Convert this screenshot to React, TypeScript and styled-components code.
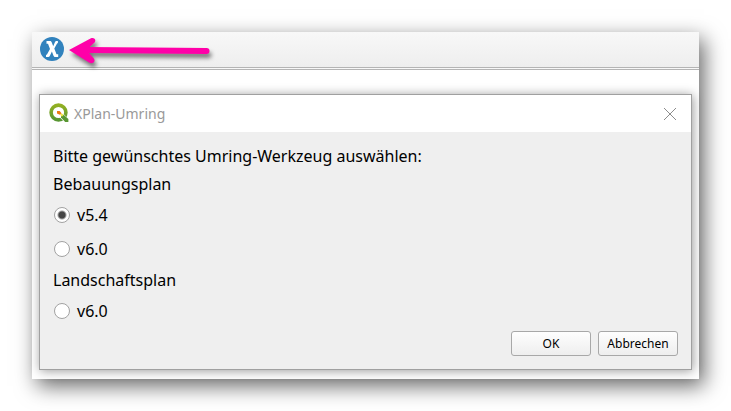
import React, { useState } from "react";
import styled, { createGlobalStyle } from "styled-components";

const GlobalStyle = createGlobalStyle`
  * { box-sizing: border-box; }
  body {
    margin: 0;
    background: #fff;
    color: #000;
    font-family: "Noto Sans", "Open Sans", sans-serif;
  }
`;

const Page = styled.main`
  padding: 32px;
`;

const AppWindow = styled.div`
  background: #fff;
  box-shadow: 5px 7px 20px rgba(0, 0, 0, 0.6);
`;

const Toolbar = styled.header`
  display: flex;
  align-items: center;
  height: 38px;
  padding: 0 7px 1px;
  background: linear-gradient(#f8f8f8, #eeeeee);
  border-bottom: 3px double #b4b4b4;
`;

const ToolButton = styled.button`
  display: flex;
  padding: 0;
  border: 0;
  background: none;
`;

const Arrow = styled.svg`
  margin: 2px 0 0 3px;
  overflow: visible;
  filter: drop-shadow(2px 4px 2px rgba(0, 0, 0, 0.5));
`;

const Workspace = styled.div`
  padding: 24px 7px 9px;
`;

const Dialog = styled.section`
  border: 1px solid #a0a0a0;
  background: #efefef;
  box-shadow: 1px 1px 10px rgba(0, 0, 0, 0.4);
`;

const TitleBar = styled.div`
  display: flex;
  align-items: center;
  height: 37px;
  padding: 0 14px 0 9px;
  background: #fff;
`;

const Title = styled.h1`
  flex: 1;
  margin: 0 0 0 4px;
  font-size: 14px;
  line-height: 24px;
  font-weight: 400;
  color: #999;
`;

const CloseButton = styled.button`
  display: flex;
  padding: 0;
  border: 0;
  background: none;
`;

const Form = styled.form`
  display: flex;
  flex-direction: column;
  gap: 4px;
  padding: 12px 13px 13px;
  font-size: 16px;
  line-height: 24px;
`;

const Text = styled.p`
  margin: 0;
`;

const Option = styled.label`
  display: flex;
  align-items: center;
  gap: 7px;
  height: 30px;
  padding-left: 1px;
`;

const Radio = styled.input`
  appearance: none;
  width: 16px;
  height: 16px;
  margin: 0;
  border: 1px solid #a2a2a2;
  border-radius: 50%;
  background: #fff;

  &:checked {
    background: radial-gradient(circle, #454545 0 3px, #fff 5px);
  }
`;

const Actions = styled.div`
  display: flex;
  justify-content: flex-end;
  gap: 7px;
  padding-top: 1px;
`;

const PushButton = styled.button`
  width: 80px;
  height: 25px;
  padding: 0;
  border: 1px solid #a8a8a8;
  border-radius: 3px;
  background: linear-gradient(#fefefe, #eeeeee);
  color: #000;
  font-family: inherit;
  font-size: 12px;
  line-height: 16px;
`;

function ToolIcon() {
  return (
    <svg width="26" height="26" viewBox="0 0 26 26" aria-hidden="true">
      <circle cx="13" cy="13" r="12" fill="#3182bd" />
      <path
        d="M7.500 5h3.500c1 0 1.500.6 1.800 1.500l1.400 3.800 1.700-4C16.300 5.400 16.800 5 17.600 5h1.300v2.300h-.7l-2.900 5.300 2.200 5.600h1.700V21h-3c-1 0-1.500-.6-1.800-1.500l-1.500-4-2 4.300c-.4.800-.9 1.200-1.700 1.200H7v-2.300h.8l3.200-5.800-2-5.100H7.500z"
        fill="#fff"
      />
    </svg>
  );
}

function QgisIcon() {
  return (
    <svg width="21" height="21" viewBox="0 0 21 21" aria-hidden="true">
      <defs>
        <linearGradient id="ring" x1="0" y1="0" x2="0" y2="1">
          <stop offset="0" stopColor="#93b023" />
          <stop offset="1" stopColor="#589632" />
        </linearGradient>
      </defs>
      <circle cx="9.500" cy="9.500" r="7.400" fill="none" stroke="url(#ring)" strokeWidth="3.600" />
      <path d="m11 11 8.500 8.500" stroke="#fff" strokeWidth="5" />
      <path d="M12 11.700h2.600l4.800 4.300v3h-3.200L12 14.500z" fill="#589632" />
      <path d="m11 11.700 1.700-1.500 1.900 1.900-1.700 1.700z" fill="#f0e64a" />
      <path d="M8 8h2.700l1.800 2.200-1.700 1.600L8 10.500z" fill="#ee7913" />
    </svg>
  );
}

export default function App() {
  const [choice, setChoice] = useState("b54");
  const option = (id: string, label: string) => (
    <Option>
      <Radio
        type="radio"
        name="tool"
        value={id}
        checked={choice === id}
        onChange={() => setChoice(id)}
      />
      {label}
    </Option>
  );

  return (
    <Page>
      <GlobalStyle />
      <AppWindow>
        <Toolbar>
          <ToolButton type="button" aria-label="XPlan-Umring">
            <ToolIcon />
          </ToolButton>
          <Arrow width="142" height="26" viewBox="0 0 142 26" aria-hidden="true">
            <path d="M18 13 138.500 14" stroke="#ff00a8" strokeWidth="6" strokeLinecap="round" />
            <path
              d="M1 13 22.500 1.500c4-1.800 6.500 2 3.500 4.500L18.500 13l7 8c3 3.500-1 6.500-4.500 4.500z"
              fill="#ff00a8"
            />
          </Arrow>
        </Toolbar>
        <Workspace>
          <Dialog role="dialog" aria-labelledby="dialog-title">
            <TitleBar>
              <QgisIcon />
              <Title id="dialog-title">XPlan-Umring</Title>
              <CloseButton type="button" aria-label="Schließen">
                <svg width="14" height="14" viewBox="0 0 14 14" aria-hidden="true">
                  <path d="M1 1 13 13M13 1 1 13" stroke="#8c8c8c" strokeWidth="1" />
                </svg>
              </CloseButton>
            </TitleBar>
            <Form onSubmit={(event) => event.preventDefault()}>
              <Text>Bitte gewünschtes Umring-Werkzeug auswählen:</Text>
              <Text>Bebauungsplan</Text>
              {option("b54", "v5.4")}
              {option("b60", "v6.0")}
              <Text>Landschaftsplan</Text>
              {option("l60", "v6.0")}
              <Actions>
                <PushButton type="submit">OK</PushButton>
                <PushButton type="button">Abbrechen</PushButton>
              </Actions>
            </Form>
          </Dialog>
        </Workspace>
      </AppWindow>
    </Page>
  );
}
